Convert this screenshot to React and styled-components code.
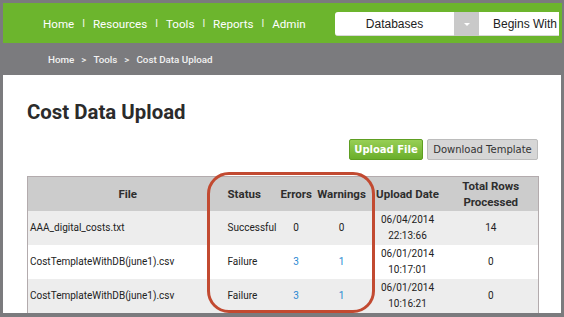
import React from "react";
import styled, { createGlobalStyle } from "styled-components";

const GlobalStyle = createGlobalStyle`
  html, body { margin: 0; padding: 0; }
  body { font-family: Roboto, "Liberation Sans", sans-serif; }
`;

const Frame = styled.div`
  width: 564px;
  height: 317px;
  box-sizing: border-box;
  padding: 3px 3px 0 3px;
  background: #7b7b7e;
  overflow: hidden;
`;

const TopBar = styled.div`
  height: 40px;
  background: #6cb52d;
  display: flex;
  align-items: center;
  padding: 0 3px 0 40px;
  margin-right: -1px;
`;

const Nav = styled.nav`
  display: flex;
  align-items: center;
  gap: 8px;
  color: #fff;
  font-size: 11.6px;
  margin-top: 1px;
`;

const Sep = styled.span`
  font-size: 10px;
  opacity: 0.9;
`;

const Search = styled.div`
  margin-left: auto;
  display: flex;
  height: 24px;
  margin-top: 2px;
  font-family: "Liberation Sans", Arial, sans-serif;
  font-size: 12px;
  color: #222;
`;

const SelectBox = styled.div`
  width: ${(p) => p.w}px;
  display: flex;
  align-items: center;
  justify-content: ${(p) => (p.left ? "flex-start" : "center")};
  padding-left: ${(p) => (p.left ? 14 : 0)}px;
  box-sizing: border-box;
  background: #fff;
  border-radius: ${(p) => (p.left ? "0" : "3px 0 0 3px")};
  border-bottom: 1px solid #d8d8d8;
  white-space: nowrap;
  overflow: hidden;
`;

const Caret = styled.div`
  width: 25px;
  background: #c9c9c9;
  display: flex;
  align-items: center;
  justify-content: center;
  &::after {
    content: "";
    border-left: 3px solid transparent;
    border-right: 3px solid transparent;
    border-top: 3px solid #fff;
  }
`;

const Crumbs = styled.div`
  height: 32px;
  display: flex;
  align-items: center;
  gap: 7px;
  padding-left: 45px;
  color: #f2f2f2;
  font-size: 9.8px;
  font-weight: 500;
`;

const Content = styled.div`
  height: 238px;
  background: #fff;
  box-sizing: border-box;
  padding: 26px 23px 0 24px;
`;

const Title = styled.h1`
  margin: 0;
  font-size: 20.4px;
  line-height: 23px;
  font-weight: 700;
  color: #2b2b2b;
`;

const Actions = styled.div`
  display: flex;
  justify-content: flex-end;
  gap: 4px;
  margin-top: 15px;
`;

const Button = styled.button`
  height: 21px;
  width: ${(p) => p.w}px;
  padding: 0;
  border-radius: 2px;
  font-family: "DejaVu Sans", Verdana, sans-serif;
  font-size: 10px;
  border: 1px solid ${(p) => (p.primary ? "#5e9e22" : "#bcbcbc")};
  background: ${(p) =>
    p.primary ? "linear-gradient(#97cf55, #6aae2b)" : "#d6d6d6"};
  color: ${(p) => (p.primary ? "#fff" : "#333")};
  font-weight: ${(p) => (p.primary ? 700 : 400)};
`;

const TableWrap = styled.div`
  position: relative;
  margin-top: 16px;
`;

const Table = styled.table`
  width: 511px;
  border-collapse: collapse;
  table-layout: fixed;
  border-left: 1px solid #b3abad;
  border-right: 1px solid #b3abad;
  border-top: 1px solid #b3abad;
  font-size: 10px;
  color: #222;
`;

const Th = styled.th`
  height: 34px;
  padding: 0;
  background: #cccccc;
  font-size: 11.5px;
  line-height: 16px;
  font-weight: 700;
  color: #2e2e2e;
  text-align: ${(p) => (p.left ? "left" : "center")};
`;

const Row = styled.tr`
  background: ${(p) => (p.alt ? "#ededed" : "#fff")};
`;

const Td = styled.td`
  height: 34px;
  padding: 0 0 0 ${(p) => (p.pad ? 2 : 0)}px;
  line-height: 16px;
  text-align: ${(p) => (p.left ? "left" : "center")};
  color: ${(p) => (p.link ? "#2a88d2" : "#222")};
`;

const Highlight = styled.div`
  position: absolute;
  left: 180px;
  top: -4px;
  width: 168px;
  height: 141px;
  box-sizing: border-box;
  border: 3px solid #c24a31;
  border-radius: 22px;
  pointer-events: none;
`;

const rows = [
  { file: "AAA_digital_costs.txt", status: "Successful", errors: 0, warnings: 0, date: "06/04/2014", time: "22:13:66", total: 14 },
  { file: "CostTemplateWithDB(june1).csv", status: "Failure", errors: 3, warnings: 1, date: "06/01/2014", time: "10:17:01", total: 0 },
  { file: "CostTemplateWithDB(june1).csv", status: "Failure", errors: 3, warnings: 1, date: "06/01/2014", time: "10:16:21", total: 0 },
];

const navItems = ["Home", "Resources", "Tools", "Reports", "Admin"];

export default function App() {
  return (
    <Frame>
      <GlobalStyle />
      <TopBar>
        <Nav>
          {navItems.map((item, i) => (
            <React.Fragment key={item}>
              {i > 0 && <Sep>I</Sep>}
              <span>{item}</span>
            </React.Fragment>
          ))}
        </Nav>
        <Search>
          <SelectBox w={119}>Databases</SelectBox>
          <Caret />
          <SelectBox w={80} left>Begins With</SelectBox>
        </Search>
      </TopBar>
      <Crumbs>
        <span>Home</span>
        <span>&gt;</span>
        <span>Tools</span>
        <span>&gt;</span>
        <span>Cost Data Upload</span>
      </Crumbs>
      <Content>
        <Title>Cost Data Upload</Title>
        <Actions>
          <Button primary w={74}>Upload File</Button>
          <Button w={111}>Download Template</Button>
        </Actions>
        <TableWrap>
          <Table>
            <colgroup>
              <col style={{ width: 200 }} />
              <col style={{ width: 53 }} />
              <col style={{ width: 31 }} />
              <col style={{ width: 60 }} />
              <col style={{ width: 72 }} />
              <col style={{ width: 95 }} />
            </colgroup>
            <thead>
              <tr>
                <Th>File</Th>
                <Th left>Status</Th>
                <Th>Errors</Th>
                <Th>Warnings</Th>
                <Th>Upload Date</Th>
                <Th>Total Rows<br />Processed</Th>
              </tr>
            </thead>
            <tbody>
              {rows.map((r, i) => (
                <Row key={i} alt={i % 2 === 0}>
                  <Td left pad>{r.file}</Td>
                  <Td left>{r.status}</Td>
                  <Td link={r.errors > 0}>{r.errors}</Td>
                  <Td link={r.warnings > 0}>{r.warnings}</Td>
                  <Td>{r.date}<br />{r.time}</Td>
                  <Td>{r.total}</Td>
                </Row>
              ))}
            </tbody>
          </Table>
          <Highlight />
        </TableWrap>
      </Content>
    </Frame>
  );
}
